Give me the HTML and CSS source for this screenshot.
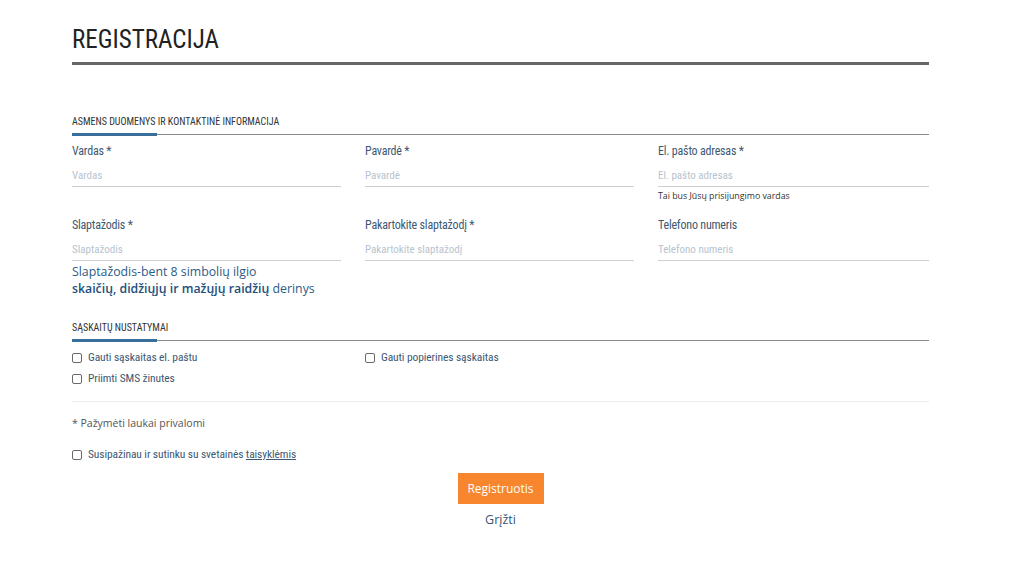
FILE: index.html
```html
<!DOCTYPE html>
<html lang="lt">
<head>
<meta charset="utf-8">
<title>Registracija</title>
<link rel="stylesheet" href="styles.css">
</head>
<body>
<div class="page">
  <h1 class="title">REGISTRACIJA</h1>
  <div class="title-rule"></div>

  <section class="section">
    <h2 class="section-head"><span>ASMENS DUOMENYS IR KONTAKTINĖ INFORMACIJA</span></h2>
    <div class="grid">
      <div class="field">
        <label class="label">Vardas *</label>
        <div class="input">Vardas</div>
      </div>
      <div class="field">
        <label class="label">Pavardė *</label>
        <div class="input">Pavardė</div>
      </div>
      <div class="field">
        <label class="label">El. pašto adresas *</label>
        <div class="input">El. pašto adresas</div>
        <div class="hint">Tai bus Jūsų prisijungimo vardas</div>
      </div>
      <div class="field">
        <label class="label">Slaptažodis *</label>
        <div class="input">Slaptažodis</div>
        <div class="pw-hint">Slaptažodis-bent 8 simbolių ilgio<br><b>skaičių, didžiųjų ir mažųjų raidžių</b> derinys</div>
      </div>
      <div class="field">
        <label class="label">Pakartokite slaptažodį *</label>
        <div class="input">Pakartokite slaptažodį</div>
      </div>
      <div class="field">
        <label class="label">Telefono numeris</label>
        <div class="input">Telefono numeris</div>
      </div>
    </div>
  </section>

  <section class="section section-2">
    <h2 class="section-head"><span>SĄSKAITŲ NUSTATYMAI</span></h2>
    <div class="checks">
      <div class="check-col">
        <label class="check"><span class="box"></span>Gauti sąskaitas el. paštu</label>
        <label class="check"><span class="box"></span>Priimti SMS žinutes</label>
      </div>
      <div class="check-col">
        <label class="check"><span class="box"></span>Gauti popierines sąskaitas</label>
      </div>
    </div>
  </section>

  <div class="divider"></div>
  <p class="required">* Pažymėti laukai privalomi</p>
  <label class="check terms"><span class="box"></span>Susipažinau ir sutinku su svetainės&nbsp;<a href="#">taisyklėmis</a></label>

  <div class="actions">
    <button class="btn">Registruotis</button>
    <a class="back" href="#">Grįžti</a>
  </div>
</div>
</body>
</html>
```

FILE: styles.css
```css
* { box-sizing: border-box; }
html, body { margin: 0; padding: 0; background: #fff; }
body { font-family: "Roboto Condensed", "Roboto", "Liberation Sans", sans-serif; color: #333; }

.page {
  width: 857px;
  margin-left: 72px;
  padding-top: 25px;
}

.title {
  margin: 0;
  font-weight: 400;
  font-size: 25px;
  line-height: 30px;
  color: #222;
}
.title-rule {
  margin-top: 7px;
  height: 3px;
  background: #666;
}

.section { margin-top: 51px; }
.section-2 { margin-top: 30px; }

.section-head {
  margin: 0;
  font-weight: 400;
  font-size: 10px;
  line-height: 12px;
  color: #333;
  border-bottom: 1px solid #8a8a8a;
  position: relative;
  padding-bottom: 6px;
}
.section-head::after {
  content: "";
  position: absolute;
  left: 0;
  bottom: -2px;
  width: 85px;
  height: 3px;
  background: #3a6f9c;
}

.grid {
  display: grid;
  grid-template-columns: 269px 269px 271px;
  column-gap: 24px;
  padding-top: 9px;
}
.field { height: 74px; }
.label {
  display: block;
  font-size: 12px;
  line-height: 15px;
  color: #3d5873;
  letter-spacing: -0.2px;
}
.input {
  margin-top: 10px;
  font-size: 11px;
  line-height: 14px;
  padding-bottom: 3px;
  color: #b7c3cf;
  border-bottom: 1px solid #cfcfcf;
}
.hint {
  margin-top: 3px;
  font-family: "Open Sans", "Liberation Sans", sans-serif;
  font-size: 8.8px;
  line-height: 12px;
  color: #333;
}
.pw-hint {
  margin-top: 2px;
  font-family: "Open Sans", "Liberation Sans", sans-serif;
  font-size: 12.3px;
  line-height: 17px;
  color: #2c5b88;
}
.pw-hint b { font-weight: 600; color: #234f7c; }

.checks {
  display: grid;
  grid-template-columns: 293px 1fr;
  padding-top: 9px;
}
.check-col { display: flex; flex-direction: column; gap: 6px; }
.check {
  display: flex;
  align-items: center;
  font-size: 11.5px;
  line-height: 15px;
  color: #3d5873;
  letter-spacing: -0.1px;
}
.box {
  width: 10px;
  height: 10px;
  border: 1px solid #6a6a6a;
  border-radius: 2px;
  margin-right: 6px;
  flex: none;
}

.divider {
  margin-top: 15px;
  height: 1px;
  background: #ececec;
}
.required {
  margin: 14px 0 0;
  font-family: "Open Sans", "Liberation Sans", sans-serif;
  font-size: 10.5px;
  line-height: 15px;
  color: #555;
}
.terms { margin-top: 16px; }
.terms a { color: #3d5873; text-decoration: underline; }

.actions {
  display: flex;
  flex-direction: column;
  align-items: center;
  margin-top: 11px;
}
.btn {
  width: 86px;
  height: 31px;
  border: 0;
  background: #f7862e;
  color: #fff;
  font-family: "Open Sans", "Liberation Sans", sans-serif;
  font-size: 12px;
}
.back {
  margin-top: 7px;
  font-family: "Open Sans", "Liberation Sans", sans-serif;
  font-size: 12.5px;
  color: #3b5670;
  text-decoration: none;
}
```
